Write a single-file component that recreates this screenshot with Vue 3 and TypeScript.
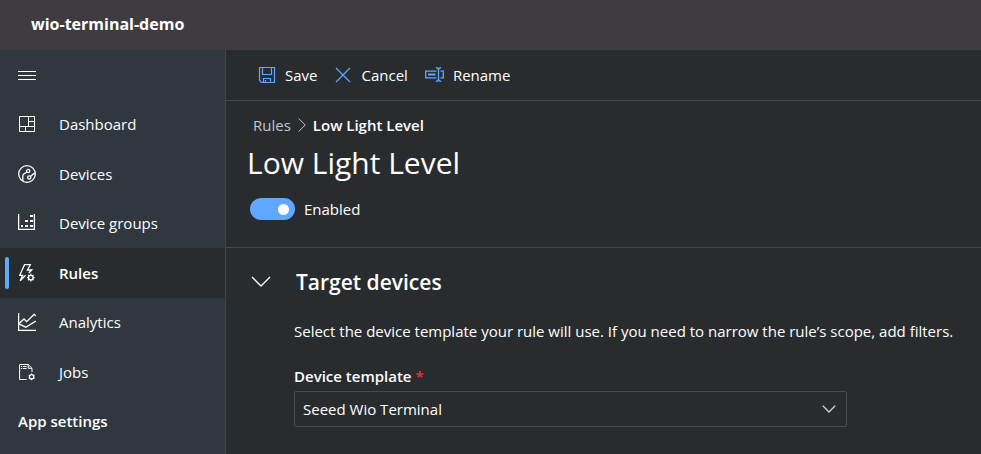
<script setup lang="ts">
import { ref } from 'vue'

interface NavItem {
  id: string
  label: string
}

const navItems: NavItem[] = [
  { id: 'dashboard', label: 'Dashboard' },
  { id: 'devices', label: 'Devices' },
  { id: 'groups', label: 'Device groups' },
  { id: 'rules', label: 'Rules' },
  { id: 'analytics', label: 'Analytics' },
  { id: 'jobs', label: 'Jobs' },
]

const activeItem = ref('rules')
const enabled = ref(true)
const expanded = ref(true)
const template = ref('Seeed Wio Terminal')
</script>

<template>
  <div class="app">
    <header class="topbar">wio-terminal-demo</header>
    <div class="body">
      <nav class="sidebar" aria-label="Main">
        <button class="menu" type="button" aria-label="Toggle navigation">
          <svg width="18" height="18" viewBox="0 0 18 18" shape-rendering="crispEdges">
            <path d="M0 5.5h18M0 9.5h18M0 13.5h18" />
          </svg>
        </button>
        <ul class="nav-list">
          <li v-for="item in navItems" :key="item.id">
            <a
              href="#"
              class="nav-link"
              :class="{ active: item.id === activeItem }"
              @click.prevent="activeItem = item.id"
            >
              <svg width="18" height="18" viewBox="0 0 18 18" aria-hidden="true">
                <g v-if="item.id === 'dashboard'">
                  <path d="M1.5 1.5h15v15h-15zM10.5 1.5v10M1.5 11.5h15M10.5 6.5h6M7.5 11.5v5" />
                </g>
                <g v-else-if="item.id === 'devices'" class="medium">
                  <circle cx="9" cy="9" r="8.3" />
                  <circle cx="10.2" cy="6" r="1.6" />
                  <circle cx="11.2" cy="12.4" r="1.6" />
                  <path d="M8.8 6.9 5.6 9.3Q4.8 10 4.8 11v4.9M12.5 11.5l2.4-2.2q.8-.7 2.1-.8" />
                </g>
                <g v-else-if="item.id === 'groups'">
                  <path class="medium" d="M.6 0v15.4h15.8V0" />
                  <path
                    class="solid"
                    d="M3 11h2v2H3zM7 11h3v2H7zM12 11h3v2h-3zM7 6h3v2H7zM12 6h3v2h-3zM12 1h3v2h-3z"
                  />
                </g>
                <g v-else-if="item.id === 'rules'" class="medium">
                  <path d="M7.6 11.3 2.2 16.8 4.6 11.3H1.8L6.5.7h5.8L9.4 6h4.3L10.8 9" />
                  <circle cx="12.8" cy="13.6" r="2.3" />
                  <path
                    d="M12.8 9.8v1.5M12.8 15.9v1.5M9 13.6h1.5M15.1 13.6h1.5M10.1 10.9l1 1M14.5 15.3l1 1M10.1 16.3l1-1M14.5 11.9l1-1"
                  />
                </g>
                <g v-else-if="item.id === 'analytics'" class="medium">
                  <path d="M.6 0v17.4H18" />
                  <path d="M.8 10.8 6 6l2.7 2.7L16.2 1.3l1.6 1.8M.8 10.8l7 3.4L17.8 8" />
                </g>
                <g v-else>
                  <path d="M8.6 16.5h-7v-15h8.6l3.8 3.8V9M10.2 1.5v3.8H14M3 3.5h1.2M5 3.5h3.6M3 5.5h1.2M5 5.5h3.6" />
                  <circle class="medium" cx="13.6" cy="13.8" r="2.2" />
                  <path
                    d="M13.6 10.4v1.2M13.6 16v1.2M10.7 12.1l1 .6M15.5 14.9l1 .6M10.7 15.5l1-.6M15.5 12.7l1-.6"
                  />
                </g>
              </svg>
              <span>{{ item.label }}</span>
            </a>
          </li>
        </ul>
        <h2 class="nav-heading">App settings</h2>
      </nav>

      <main class="content">
        <div class="toolbar">
          <button type="button" class="command">
            <svg width="18" height="18" viewBox="0 0 18 18" aria-hidden="true">
              <path d="M1.5 1.5h15v15H3.5l-2-2zM4.5 1.5v7h9v-7M5.5 16.5v-4h7v4M7.5 14v2.5" />
            </svg>
            Save
          </button>
          <button type="button" class="command">
            <svg width="18" height="18" viewBox="0 0 18 18" aria-hidden="true">
              <path d="m2 2 14 14M16 2 2 16" />
            </svg>
            Cancel
          </button>
          <button type="button" class="command">
            <svg width="19" height="18" viewBox="0 0 19 18" aria-hidden="true">
              <path class="medium" d="M11.5 5.2H.7v6.6h10.8M15.5 5.2h2.8v6.6h-2.8M10.8 1.7q2.7 0 2.7 2.3v9q0 2.3-2.7 2.3M16.2 1.7Q13.5 1.7 13.5 4M13.5 13q0 2.3 2.7 2.3" />
              <path class="thick" d="M3 8.5h7.5" />
            </svg>
            Rename
          </button>
        </div>

        <div class="rule-head">
          <nav class="crumbs" aria-label="Breadcrumb">
            <a href="#">Rules</a>
            <svg width="8" height="14" viewBox="0 0 8 14" aria-hidden="true">
              <path d="m.7.5 6.5 6.5-6.5 6.5" />
            </svg>
            <span class="current">Low Light Level</span>
          </nav>
          <h1>Low Light Level</h1>
          <label class="toggle">
            <input v-model="enabled" type="checkbox" role="switch" />
            <span>{{ enabled ? 'Enabled' : 'Disabled' }}</span>
          </label>
        </div>

        <section class="target">
          <button type="button" class="section-title" :aria-expanded="expanded" @click="expanded = !expanded">
            <svg width="20" height="12" viewBox="0 0 20 12" aria-hidden="true">
              <path class="medium" d="m1 1 9 9 9-9" />
            </svg>
            <span>Target devices</span>
          </button>
          <div v-if="expanded" class="section-body">
            <p>Select the device template your rule will use. If you need to narrow the rule’s scope, add filters.</p>
            <label for="device-template">Device template <span class="required">*</span></label>
            <div class="select">
              <select id="device-template" v-model="template" required>
                <option>Seeed Wio Terminal</option>
              </select>
              <svg width="14" height="8" viewBox="0 0 14 8" aria-hidden="true">
                <path class="medium" d="m.8.8 6.2 6.2L13.2.8" />
              </svg>
            </div>
          </div>
        </section>
      </main>
    </div>
  </div>
</template>

<style>
body {
  background: #292c2e;
}
</style>

<style scoped>
.app {
  display: flex;
  flex-direction: column;
  height: 100vh;
  overflow: hidden;
  background: #292c2e;
  color: #fff;
  font-family: 'Segoe UI', 'Open Sans', 'Noto Sans', sans-serif;
  font-size: 15px;
  line-height: 20px;
}

.app *,
.app {
  box-sizing: border-box;
}

svg {
  flex: none;
  fill: none;
  stroke: currentColor;
  stroke-width: 1;
}

button,
select {
  font: inherit;
  color: inherit;
  background: none;
  border: 0;
  padding: 0;
  margin: 0;
  cursor: pointer;
}

a {
  color: inherit;
  text-decoration: none;
}

.topbar {
  flex: none;
  padding: 14px 31px 16px;
  background: #3e3c41;
  font-size: 16px;
  font-weight: 700;
}

.body {
  display: flex;
  flex: 1;
  min-height: 0;
}

.sidebar {
  flex: none;
  width: 226px;
  background: #30373e;
  border-right: 1px solid #444648;
}

.menu {
  display: flex;
  align-items: center;
  height: 50px;
  padding: 0 18px;
}

.nav-list {
  margin: 0;
  padding: 0;
  list-style: none;
}

.nav-link {
  display: flex;
  align-items: center;
  gap: 23px;
  height: 49px;
  padding: 0 13px 1px;
  border-left: 5px solid transparent;
}

li:nth-child(even) .nav-link {
  height: 50px;
  padding-bottom: 0;
}

.nav-link.active {
  position: relative;
  background: #292c2e;
  font-weight: 600;
}

.nav-link.active::before {
  content: '';
  position: absolute;
  left: 0;
  top: 9px;
  bottom: 9px;
  width: 4px;
  border-radius: 2px;
  background: #60a8ff;
}

.medium {
  stroke-width: 1.3;
}

.thick {
  stroke-width: 2;
}

.solid {
  fill: currentColor;
  stroke: none;
}

.nav-heading {
  margin: 0;
  padding: 14px 18px;
  font-size: 15px;
  font-weight: 600;
}

.content {
  flex: 1;
  min-width: 0;
}

.toolbar {
  display: flex;
  align-items: center;
  gap: 17px;
  padding: 15px 32px;
  border-bottom: 1px solid #444648;
}

.command {
  display: flex;
  align-items: center;
  gap: 9px;
}

.command svg {
  color: #60a8ff;
  stroke-width: 1.2;
}

.rule-head {
  padding: 14px 21px 27px;
  border-bottom: 1px solid #444648;
}

.crumbs {
  display: flex;
  align-items: center;
  gap: 7px;
  padding-left: 6px;
  color: #c4c5c6;
}

.current {
  color: #fff;
  font-weight: 600;
}

h1 {
  margin: 6px 0 13px;
  font-size: 30px;
  font-weight: 400;
  line-height: 44px;
}

.toggle {
  display: flex;
  align-items: center;
  gap: 9px;
  width: fit-content;
  padding-left: 3px;
}

.toggle input {
  appearance: none;
  display: flex;
  align-items: center;
  width: 45px;
  height: 22px;
  margin: 0;
  padding: 0 6px;
  border-radius: 11px;
  background: #605e5c;
}

.toggle input:checked {
  justify-content: flex-end;
  background: #60a8ff;
}

.toggle input::before {
  content: '';
  width: 11px;
  height: 11px;
  border-radius: 50%;
  background: #fff;
}

.target {
  padding: 18px 25px;
}

.section-title {
  display: flex;
  align-items: center;
  gap: 25px;
  font-size: 21px;
  font-weight: 600;
  line-height: 32px;
}

.section-body {
  padding: 23px 0 0 43px;
}

.section-body p {
  margin: 0 0 25px;
}

.section-body label {
  display: block;
  margin-bottom: 5px;
  font-weight: 600;
}

.required {
  color: #f1333b;
}

.select {
  position: relative;
  max-width: 553px;
}

.select select {
  appearance: none;
  display: block;
  width: 100%;
  height: 36px;
  padding: 0 32px 0 8px;
  border: 1px solid #4a4a4a;
  border-radius: 2px;
}

.select option {
  background: #292c2e;
}

.select svg {
  position: absolute;
  top: 14px;
  right: 11px;
  color: #d0d0d0;
  pointer-events: none;
}
</style>
